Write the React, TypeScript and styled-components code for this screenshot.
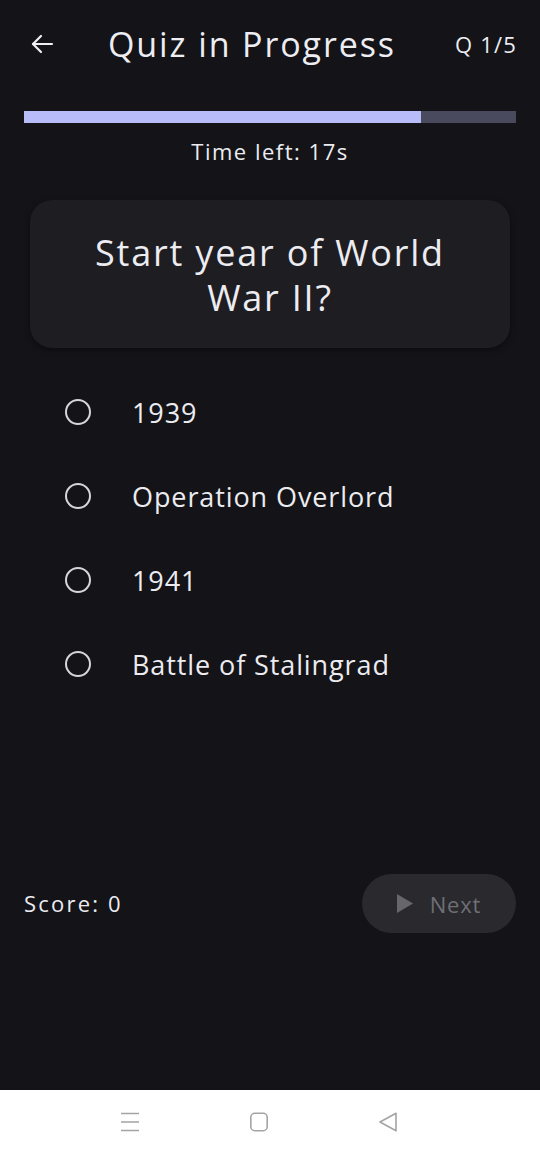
import React from "react";
import styled, { createGlobalStyle } from "styled-components";

const Global = createGlobalStyle`
  html, body { margin: 0; padding: 0; background: #131318; }
  body { font-family: "Open Sans", "Noto Sans", sans-serif; color: #ececf0; }
  * { box-sizing: border-box; }
`;

const Screen = styled.div`
  width: 540px;
  height: 1156px;
  display: flex;
  flex-direction: column;
  background: #131318;
`;

const Main = styled.main`
  flex: 1;
  display: flex;
  flex-direction: column;
`;

const Header = styled.header`
  height: 88px;
  display: flex;
  align-items: center;
  padding: 0 24px 0 30px;
`;

const BackButton = styled.button`
  width: 24px;
  height: 24px;
  padding: 0;
  border: 0;
  background: none;
  color: #f0f0f4;
  display: flex;
  align-items: center;
  justify-content: center;
`;

const Title = styled.h1`
  margin: 0 0 0 54px;
  flex: 1;
  font-size: 34px;
  font-weight: 400;
  letter-spacing: 1.9px;
  color: #ededf2;
  line-height: 40px;
`;

const Counter = styled.span`
  font-size: 22px;
  color: #ededf2;
  letter-spacing: 1.2px;
  margin-right: -1px;
`;

const Track = styled.div`
  margin: 23px 24px 0;
  height: 12px;
  background: #4a4a5e;
  display: flex;
`;

const Fill = styled.div`
  height: 100%;
  background: #b8bdfa;
`;

const TimeLeft = styled.div`
  margin-top: 13px;
  text-align: center;
  font-size: 22px;
  line-height: 30px;
  letter-spacing: 1.5px;
  color: #ececf0;
`;

const Card = styled.section`
  margin: 34px 30px 0;
  height: 148px;
  border-radius: 22px;
  background: #1e1d22;
  display: flex;
  align-items: center;
  justify-content: center;
  padding: 2px 50px 0;
  box-shadow: 0 2px 6px rgba(0, 0, 0, 0.35);
`;

const Question = styled.h2`
  margin: 0;
  text-align: center;
  font-size: 36px;
  font-weight: 400;
  line-height: 45px;
  letter-spacing: 1.8px;
  color: #ececf1;
`;

const Options = styled.ul`
  list-style: none;
  margin: 22px 0 0;
  padding: 0;
`;

const Option = styled.li`
  height: 84px;
  display: flex;
  align-items: center;
  padding-left: 65px;
  gap: 41px;
`;

const Radio = styled.span`
  width: 26px;
  height: 26px;
  border-radius: 50%;
  border: 2.5px solid #d6d6da;
  flex-shrink: 0;
`;

const OptionText = styled.span`
  font-size: 27px;
  color: #ececf0;
  letter-spacing: 0.9px;
`;

const Footer = styled.footer`
  margin-top: 168px;
  display: flex;
  align-items: center;
  justify-content: space-between;
  padding: 0 24px;
`;

const Score = styled.span`
  font-size: 22px;
  letter-spacing: 2.2px;
  color: #ececf0;
  margin-top: -2px;
`;

const NextButton = styled.button`
  width: 154px;
  height: 59px;
  border: 0;
  border-radius: 30px;
  background: #29292e;
  color: #6f6f75;
  display: flex;
  align-items: center;
  justify-content: center;
  gap: 17px;
  font-family: inherit;
  font-size: 22px;
  letter-spacing: 0.8px;
  padding: 0;
`;

const NavBar = styled.nav`
  height: 66px;
  background: #ffffff;
  display: flex;
  align-items: center;
  justify-content: center;
  gap: 111px;
  padding: 0 23px 2px 0;
`;

const NavIcon = styled.svg`
  width: 18px;
  height: 20px;
  display: block;
`;

const options = ["1939", "Operation Overlord", "1941", "Battle of Stalingrad"];

export default function App() {
  const progress = (421 - 24) / (516 - 24);
  return (
    <Screen>
      <Global />
      <Main>
        <Header>
          <BackButton aria-label="Back">
            <svg width="24" height="24" viewBox="0 0 24 24" fill="none" stroke="currentColor" strokeWidth="2.2" strokeLinecap="round" strokeLinejoin="round">
              <path d="M22 12H3" />
              <path d="M11 4l-8 8 8 8" />
            </svg>
          </BackButton>
          <Title>Quiz in Progress</Title>
          <Counter>Q 1/5</Counter>
        </Header>
        <Track>
          <Fill style={{ width: `${progress * 100}%` }} />
        </Track>
        <TimeLeft>Time left: 17s</TimeLeft>
        <Card>
          <Question>Start year of World War II?</Question>
        </Card>
        <Options>
          {options.map((o) => (
            <Option key={o}>
              <Radio />
              <OptionText>{o}</OptionText>
            </Option>
          ))}
        </Options>
        <Footer>
          <Score>Score: 0</Score>
          <NextButton>
            <svg width="16" height="19" viewBox="0 0 16 19">
              <path d="M0 0L16 9.5L0 19Z" fill="#66666b" />
            </svg>
            Next
          </NextButton>
        </Footer>
      </Main>
      <NavBar>
        <NavIcon viewBox="0 0 18 20" fill="none" stroke="#a4a4a4" strokeWidth="1.6">
          <path d="M0 1.5h18M0 10h18M0 18.5h18" />
        </NavIcon>
        <NavIcon viewBox="0 0 18 20" fill="none" stroke="#a4a4a4" strokeWidth="1.6">
          <rect x="0.8" y="1.3" width="16.4" height="17.4" rx="4" />
        </NavIcon>
        <NavIcon viewBox="0 0 18 20" fill="none" stroke="#a4a4a4" strokeWidth="1.6" strokeLinejoin="round">
          <path d="M17 1.2L1 10L17 18.8Z" />
        </NavIcon>
      </NavBar>
    </Screen>
  );
}
